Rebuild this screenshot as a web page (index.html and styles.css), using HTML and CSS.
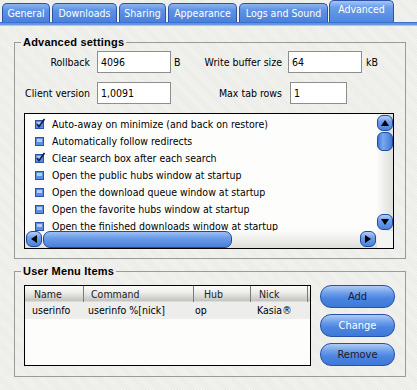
FILE: index.html
```html
<!DOCTYPE html>
<html lang="en">
<head>
    <meta charset="UTF-8">
    <meta name="viewport" content="width=device-width, initial-scale=1.0">
    <title>Settings - Advanced</title>
    <link rel="stylesheet" href="styles.css">
</head>
<body>
    <div class="tabs">
        <div class="tab tab-general">General</div>
        <div class="tab tab-downloads">Downloads</div>
        <div class="tab tab-sharing">Sharing</div>
        <div class="tab tab-appearance">Appearance</div>
        <div class="tab tab-logs">Logs and Sound</div>
        <div class="tab tab-advanced active">Advanced</div>
    </div>
    <div class="tabline"></div>

    <fieldset class="group settings">
        <legend>Advanced settings</legend>
        <div class="field-row">
            <label class="lbl">Rollback</label>
            <input class="txt" type="text" value="4096">
            <span class="unit">B</span>
            <label class="lbl2">Write buffer size</label>
            <input class="txt" type="text" value="64">
            <span class="unit2">kB</span>
        </div>
        <div class="field-row">
            <label class="lbl">Client version</label>
            <input class="txt" type="text" value="1,0091">
            <span class="unit"></span>
            <label class="lbl2 wide">Max tab rows</label>
            <input class="txt short" type="text" value="1">
        </div>

        <div class="listbox">
            <ul class="items">
                <li><svg class="chk" width="11" height="11" viewBox="0 0 11 11"><rect x="0.5" y="2.5" width="8" height="8" fill="#5d8fe0" stroke="#2a52a8"/><rect x="2" y="4" width="5" height="3" fill="#b4cff5"/><path d="M2 6 L4 8.5 L9.5 1" fill="none" stroke="#16224a" stroke-width="1.8"/></svg>Auto-away on minimize (and back on restore)</li>
                <li><svg class="chk" width="11" height="11" viewBox="0 0 11 11"><rect x="0.5" y="2.5" width="8" height="8" fill="#5d8fe0" stroke="#2a52a8"/><rect x="2" y="4" width="5" height="3" fill="#b4cff5"/></svg>Automatically follow redirects</li>
                <li><svg class="chk" width="11" height="11" viewBox="0 0 11 11"><rect x="0.5" y="2.5" width="8" height="8" fill="#5d8fe0" stroke="#2a52a8"/><rect x="2" y="4" width="5" height="3" fill="#b4cff5"/><path d="M2 6 L4 8.5 L9.5 1" fill="none" stroke="#16224a" stroke-width="1.8"/></svg>Clear search box after each search</li>
                <li><svg class="chk" width="11" height="11" viewBox="0 0 11 11"><rect x="0.5" y="2.5" width="8" height="8" fill="#5d8fe0" stroke="#2a52a8"/><rect x="2" y="4" width="5" height="3" fill="#b4cff5"/></svg>Open the public hubs window at startup</li>
                <li><svg class="chk" width="11" height="11" viewBox="0 0 11 11"><rect x="0.5" y="2.5" width="8" height="8" fill="#5d8fe0" stroke="#2a52a8"/><rect x="2" y="4" width="5" height="3" fill="#b4cff5"/></svg>Open the download queue window at startup</li>
                <li><svg class="chk" width="11" height="11" viewBox="0 0 11 11"><rect x="0.5" y="2.5" width="8" height="8" fill="#5d8fe0" stroke="#2a52a8"/><rect x="2" y="4" width="5" height="3" fill="#b4cff5"/></svg>Open the favorite hubs window at startup</li>
                <li><svg class="chk" width="11" height="11" viewBox="0 0 11 11"><rect x="0.5" y="2.5" width="8" height="8" fill="#5d8fe0" stroke="#2a52a8"/><rect x="2" y="4" width="5" height="3" fill="#b4cff5"/></svg>Open the finished downloads window at startup</li>
            </ul>
            <div class="vscroll">
                <div class="arrow"><svg width="8" height="6" viewBox="0 0 8 6"><path d="M4 0 L8 6 L0 6 Z" fill="#000"/></svg></div>
                <div class="vthumb"></div>
                <div class="vspace"></div>
                <div class="arrow"><svg width="8" height="6" viewBox="0 0 8 6"><path d="M0 0 L8 0 L4 6 Z" fill="#000"/></svg></div>
            </div>
            <div class="hscroll">
                <div class="arrow"><svg width="6" height="8" viewBox="0 0 6 8"><path d="M6 0 L6 8 L0 4 Z" fill="#000"/></svg></div>
                <div class="hthumb"></div>
                <div class="hspace"></div>
                <div class="arrow"><svg width="6" height="8" viewBox="0 0 6 8"><path d="M0 0 L6 4 L0 8 Z" fill="#000"/></svg></div>
            </div>
            <div class="corner"></div>
        </div>
    </fieldset>

    <fieldset class="group usermenu">
        <legend>User Menu Items</legend>
        <div class="menu-body">
            <div class="table">
                <div class="thead">
                    <div class="th name">Name</div>
                    <div class="th command">Command</div>
                    <div class="th hub">Hub</div>
                    <div class="th nick">Nick</div>
                </div>
                <div class="trow">
                    <div class="td name">userinfo</div>
                    <div class="td command">userinfo %[nick]</div>
                    <div class="td hub">op</div>
                    <div class="td nick">Kasia®</div>
                </div>
            </div>
            <div class="buttons">
                <button class="btn">Add</button>
                <button class="btn focus">Change</button>
                <button class="btn">Remove</button>
            </div>
        </div>
    </fieldset>
</body>
</html>
```

FILE: styles.css
```css
* {
    box-sizing: border-box;
}

body {
    margin: 0;
    font-family: "DejaVu Sans Condensed", "Liberation Sans", Arial, sans-serif;
    font-size: 10.5px;
    color: #000;
    background-color: #efefeb;
    background-image: repeating-linear-gradient(45deg, #f2f2ef 0, #f2f2ef 1px, #ebebe7 1px, #ebebe7 2px);
    height: 390px;
    overflow: hidden;
}

/* tab strip */
.tabs {
    display: flex;
    align-items: flex-end;
    gap: 2px;
    height: 22px;
    padding-left: 2px;
}

.tab {
    height: 19px;
    padding: 0;
    line-height: 18px;
    text-align: center;
    color: #fff;
    white-space: nowrap;
    border: 1px solid #2a54a6;
    border-bottom: none;
    border-radius: 5px 5px 0 0;
    background: linear-gradient(#8fb4ee 0%, #5e92e4 35%, #4a80dc 100%);
}

.tab-general { width: 48px; }
.tab-downloads { width: 65px; }
.tab-sharing { width: 47px; }
.tab-appearance { width: 69px; }
.tab-logs { width: 89px; }
.tab-advanced { width: 65px; }

.tab.active {
    height: 22px;
    margin-left: -1px;
    line-height: 17px;
    background: linear-gradient(#a6c5f4 0%, #6a9de9 30%, #4f86e0 100%);
}

.tabline {
    height: 4px;
    background: linear-gradient(#3d6fcb 0, #3d6fcb 1px, #5b8ee3 1px, #6d9be6 3px, #a9c4ee 3px);
}

/* group boxes */
.group {
    margin: 10px 11px 0 14px;
    padding: 0;
    border: 1px solid #9a9a96;
    min-width: 0;
}

.group legend {
    margin-left: 6px;
    padding: 0 2px;
    font-family: "Liberation Sans", Arial, sans-serif;
    font-weight: bold;
    font-size: 11px;
    letter-spacing: 0.2px;
    line-height: 13px;
}

.settings {
    padding: 2px 0 9px 0;
}

.usermenu {
    margin-top: 6px;
    padding: 7px 0 10px 0;
}

.field-row {
    display: flex;
    align-items: center;
    height: 22px;
    margin-bottom: 9px;
}

.lbl {
    width: 75px;
    margin-right: 7px;
    text-align: right;
}

.lbl2 {
    width: 93px;
    margin-right: 6px;
    text-align: right;
}

.lbl2.wide {
    margin-right: 8px;
}

.txt {
    width: 74px;
    height: 22px;
    padding: 0 3px;
    border: 1px solid #8e8e8a;
    background: #fff;
    font: inherit;
    color: #000;
    outline: none;
}

.txt.short {
    width: 57px;
}

.unit {
    width: 18px;
    padding-left: 3px;
}

.unit2 {
    padding-left: 4px;
}

/* check list */
.listbox {
    display: grid;
    grid-template-columns: 1fr 16px;
    grid-template-rows: 1fr 17px;
    width: 370px;
    height: 136px;
    margin-left: 9px;
    border: 1px solid #000;
    background: #fdfdfb;
}

.items {
    list-style: none;
    margin: 0;
    padding: 1px 0 0 0;
    overflow: hidden;
}

.items li {
    display: flex;
    align-items: center;
    height: 17px;
    padding-left: 10px;
    white-space: nowrap;
}

.chk {
    margin-right: 6px;
    flex-shrink: 0;
}

.vscroll {
    display: flex;
    flex-direction: column;
    background: linear-gradient(to right, #fbfbfa, #dededa);
    padding: 1px 0;
}

.hscroll {
    display: flex;
    background: linear-gradient(#fbfbfa, #dededa);
    padding: 0 1px;
}

.corner {
    background: #f4f4f2;
}

.arrow {
    display: flex;
    align-items: center;
    justify-content: center;
    width: 16px;
    height: 16px;
    flex-shrink: 0;
    border: 1px solid #1f4aa0;
    border-radius: 6px;
    background: linear-gradient(#b6d0f6 0%, #6f9ee8 40%, #4a82de 100%);
}

.vthumb {
    height: 19px;
    margin-top: 1px;
    border: 1px solid #1f4aa0;
    border-radius: 6px;
    background: linear-gradient(to right, #3f78d8 0%, #7aa8ee 35%, #5d8fe3 70%, #3d73d2 100%);
}

.vspace,
.hspace {
    flex: 1;
}

.hthumb {
    width: 189px;
    margin-left: 1px;
    border: 1px solid #1f4aa0;
    border-radius: 7px;
    background: linear-gradient(#9fc0f3 0%, #6c9ce8 40%, #4a80dc 100%);
}

/* user menu table */
.menu-body {
    display: flex;
    align-items: flex-start;
    gap: 9px;
    padding-left: 9px;
}

.table {
    width: 287px;
    height: 81px;
    border: 1px solid #000;
    background: #fdfdfb;
}

.thead,
.trow {
    display: grid;
    grid-template-columns: 59px 110px 57px 57px;
}

.thead {
    height: 16px;
    background: linear-gradient(#fbfbf9 0%, #ededea 40%, #d2d2ce 75%, #c4c4c0 90%, #e6e6e2 100%);
}

.th {
    line-height: 16px;
    border-right: 1px solid #7a7a76;
    color: #222;
}

.th.name { padding-left: 9px; }
.th.command { padding-left: 7px; }
.th.hub { padding-left: 10px; }
.th.nick { padding-left: 8px; }

.trow {
    height: 17px;
    background: #ededeb;
}

.td {
    line-height: 17px;
    white-space: nowrap;
}

.td.name { padding-left: 7px; }
.td.command { padding-left: 4px; }
.td.hub { padding-left: 1px; }
.td.nick { padding-left: 6px; }

.buttons {
    display: flex;
    flex-direction: column;
    gap: 6px;
}

.btn {
    width: 75px;
    height: 23px;
    border: 1px solid #2553a8;
    border-radius: 11px;
    background: linear-gradient(#aecbf5 0%, #6c9de9 35%, #4a84e0 60%, #3f79d8 100%);
    color: #1c1c28;
    font-family: "DejaVu Sans Condensed", "Liberation Sans", Arial, sans-serif;
    font-size: 11px;
    padding: 0;
    cursor: pointer;
}

.btn.focus {
    color: #fff;
}
```
